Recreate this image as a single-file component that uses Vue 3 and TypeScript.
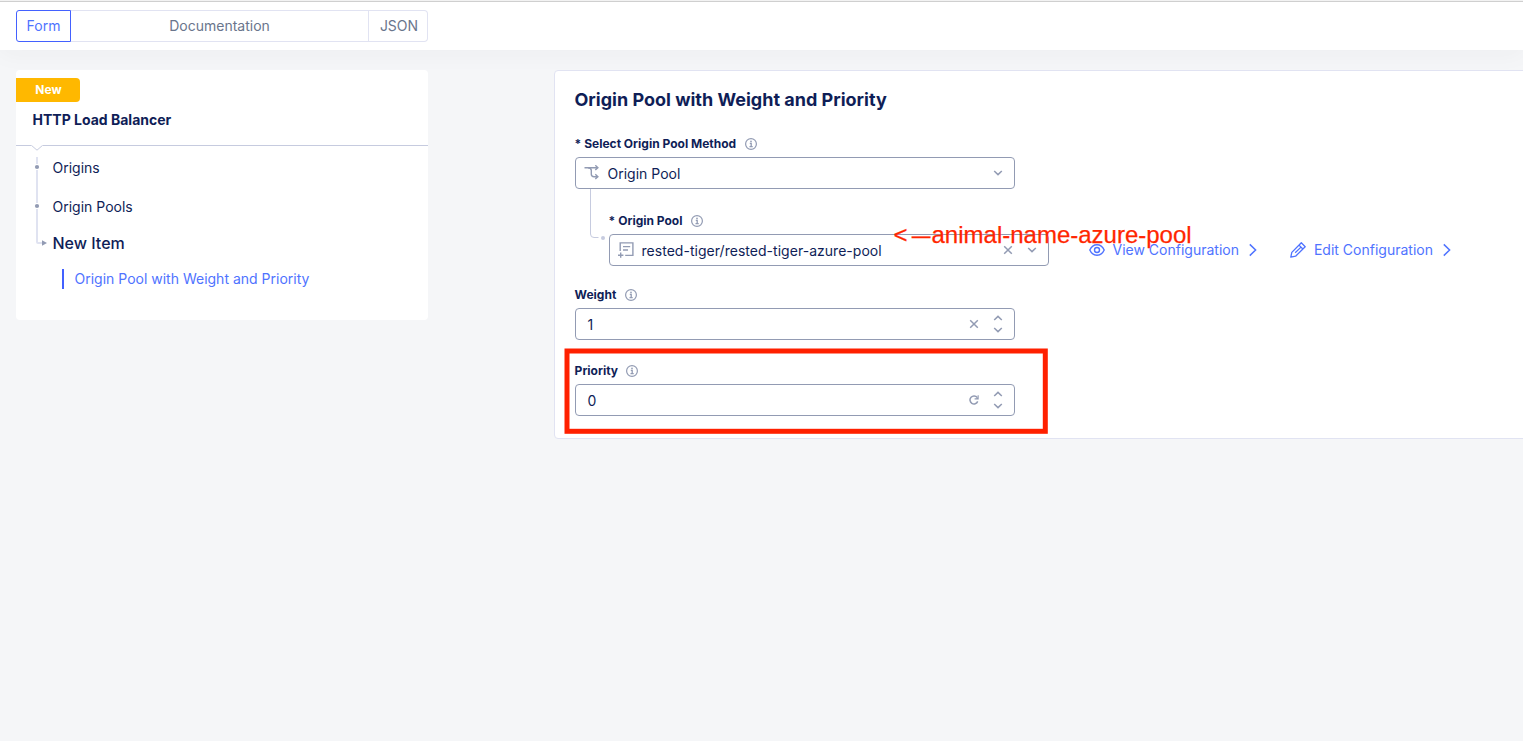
<script setup lang="ts">
interface Tab {
  id: string
  label: string
}
interface Crumb {
  id: string
  label: string
}

const tabs: Tab[] = [
  { id: 'form', label: 'Form' },
  { id: 'docs', label: 'Documentation' },
  { id: 'json', label: 'JSON' },
]
const activeTab = 'form'

const crumbs: Crumb[] = [
  { id: 'origins', label: 'Origins' },
  { id: 'pools', label: 'Origin Pools' },
]
</script>

<template>
  <div class="page">
    <svg class="defs" width="0" height="0">
      <symbol id="info" viewBox="0 0 12 12">
        <g fill="none" stroke="currentColor">
          <circle cx="6" cy="6" r="5.4" stroke-width="1.2" />
          <path d="M4.8 5.3H6.2V8.6M4.5 8.7H7.7" stroke-width="1.3" />
        </g>
        <circle cx="6" cy="3.4" r="0.85" fill="currentColor" />
      </symbol>
      <symbol id="down" viewBox="0 0 10 10">
        <path d="M1.2 3L5 6.6L8.8 3" fill="none" stroke="currentColor" stroke-width="1.5" />
      </symbol>
      <symbol id="up" viewBox="0 0 10 10">
        <path d="M1.2 7L5 3.4L8.8 7" fill="none" stroke="currentColor" stroke-width="1.5" />
      </symbol>
      <symbol id="clear" viewBox="0 0 10 10">
        <path d="M1.2 1.2L8.8 8.8M8.8 1.2L1.2 8.8" fill="none" stroke="currentColor" stroke-width="1.5" />
      </symbol>
      <symbol id="next" viewBox="0 0 10 14">
        <path d="M1.8 1.4L7.6 7L1.8 12.6" fill="none" stroke="currentColor" stroke-width="1.5" />
      </symbol>
    </svg>

    <header class="topbar">
      <nav class="tabs">
        <button
          v-for="tab in tabs"
          :key="tab.id"
          type="button"
          class="tab"
          :class="[tab.id, { active: tab.id === activeTab }]"
        >
          <span>{{ tab.label }}</span>
        </button>
      </nav>
    </header>

    <main class="content">
      <aside class="side">
        <div class="badge"><span>New</span></div>
        <h2 class="side-title">HTTP Load Balancer</h2>
        <div class="divider">
          <svg class="notch" width="12" height="8" viewBox="0 0 12 8">
            <path d="M0.5 0H11.5V1L6 5.6L0.5 1Z" fill="#fff" />
            <path d="M0.6 0.5L6 5.2L11.4 0.5" fill="none" stroke="#c6cbdf" />
          </svg>
        </div>
        <div class="tree">
          <svg class="rail" width="14" height="92" viewBox="0 0 14 92">
            <path d="M3 0V85Q3 86 4 86H8" fill="none" stroke="#e0e3f1" stroke-width="2" />
            <path d="M3 7V13M3 46V52" stroke="#fff" stroke-width="2" />
            <circle cx="3" cy="10" r="2.1" fill="#929bb3" />
            <circle cx="3" cy="49" r="2.1" fill="#929bb3" />
            <path d="M8 83.2L13 86L8 88.8Z" fill="#929bb3" />
          </svg>
          <ul class="crumbs">
            <li v-for="crumb in crumbs" :key="crumb.id" class="crumb">{{ crumb.label }}</li>
            <li class="crumb current">New Item</li>
            <li class="crumb section"><span>Origin Pool with Weight and Priority</span></li>
          </ul>
        </div>
      </aside>

      <section class="panel">
        <h1 class="panel-title">Origin Pool with Weight and Priority</h1>

        <div class="field">
          <div class="label">
            <span>* Select Origin Pool Method</span>
            <svg class="info"><use href="#info" /></svg>
          </div>
          <div class="control">
            <svg class="lead" width="16" height="16" viewBox="0 0 16 16">
              <g fill="none" stroke="currentColor" stroke-width="1.4">
                <path d="M0.5 2.7H14M11.3 0.3L13.9 2.7L11.3 5.1" />
                <path d="M4 2.7Q7.3 2.7 7.3 5.5V9.3Q7.3 11.7 10 11.7H14M11.3 9.3L13.9 11.7L11.3 14.1" />
              </g>
            </svg>
            <span class="value">Origin Pool</span>
            <svg class="mini"><use href="#down" /></svg>
          </div>
        </div>

        <div class="nested">
          <svg class="elbow" width="16" height="52" viewBox="0 0 16 52">
            <path d="M1.5 0V45Q1.5 48.5 5 48.5H9.5" fill="none" stroke="#c6cbdf" />
            <circle cx="14" cy="49" r="2" fill="#c6cbdf" />
          </svg>
          <div class="field">
            <div class="label">
              <span>* Origin Pool</span>
              <svg class="info"><use href="#info" /></svg>
            </div>
            <div class="control">
              <svg class="lead" width="16" height="16" viewBox="0 0 16 16">
                <g fill="none" stroke="currentColor" stroke-width="1.4">
                  <path d="M2.2 9V0.9H14.9V13.4H7.2M5 4.6H12.2M5 8H10" />
                  <path d="M2.7 10.5V15.8M0 13.2H5.4" />
                </g>
              </svg>
              <span class="value pool-value">rested-tiger/rested-tiger-azure-pool</span>
              <svg class="mini"><use href="#clear" /></svg>
              <svg class="mini"><use href="#down" /></svg>
            </div>
          </div>
          <div class="links">
            <a class="link">
              <svg width="16" height="16" viewBox="0 0 16 16">
                <g fill="none" stroke="currentColor" stroke-width="1.4">
                  <path d="M0.8 8C2.3 4.7 5 2.8 8 2.8S13.7 4.7 15.2 8C13.7 11.3 11 13.2 8 13.2S2.3 11.3 0.8 8Z" />
                  <circle cx="8" cy="8" r="2.5" />
                </g>
              </svg>
              <span>View Configuration</span>
              <svg class="next"><use href="#next" /></svg>
            </a>
            <a class="link edit">
              <svg width="16" height="16" viewBox="0 0 16 16">
                <g fill="none" stroke="currentColor" stroke-width="1.3" stroke-linejoin="round">
                  <path d="M0.8 15.2L1.8 10.4L11.3 0.8L15.2 4.7L5.6 14.2Z" />
                  <path d="M9 3.1L12.9 7M11 5.1L5.2 10.8" />
                </g>
              </svg>
              <span>Edit Configuration</span>
              <svg class="next"><use href="#next" /></svg>
            </a>
          </div>
        </div>

        <div class="field weight">
          <div class="label">
            <span>Weight</span>
            <svg class="info"><use href="#info" /></svg>
          </div>
          <div class="control numeric">
            <span class="value">1</span>
            <svg class="mini"><use href="#clear" /></svg>
            <span class="stepper">
              <svg class="mini"><use href="#up" /></svg>
              <svg class="mini"><use href="#down" /></svg>
            </span>
          </div>
        </div>

        <div class="field priority">
          <div class="label">
            <span>Priority</span>
            <svg class="info"><use href="#info" /></svg>
          </div>
          <div class="control numeric">
            <span class="value">0</span>
            <svg class="mini" viewBox="0 0 10 10">
              <path d="M8.2 2.5A4 4 0 1 0 8.7 6.4" fill="none" stroke="currentColor" stroke-width="1.5" />
              <path d="M9.7 0.3V4.5H5.6V3.3H7.4L8.6 2.2V0.3Z" fill="currentColor" />
            </svg>
            <span class="stepper">
              <svg class="mini"><use href="#up" /></svg>
              <svg class="mini"><use href="#down" /></svg>
            </span>
          </div>
        </div>
      </section>
    </main>

    <div class="callout"><span>&lt;</span><span class="dash">—</span><span>animal-name-azure-pool</span></div>
    <svg class="highlight" width="485" height="87" viewBox="0 0 485 87">
      <rect x="3" y="3" width="478.3" height="80.3" fill="none" stroke="#ff2000" stroke-width="5" />
    </svg>
  </div>
</template>

<style>
body {
  margin: 0;
  background: #f5f6f8;
}
</style>

<style scoped>
* {
  box-sizing: border-box;
}
.page {
  position: relative;
  height: 741px;
  overflow: hidden;
  background: #f5f6f8;
  color: #0f1e57;
  font-family: Inter, "Liberation Sans", sans-serif;
  font-size: 14px;
}
.defs {
  position: absolute;
}
svg {
  display: block;
  flex: none;
}
.topbar {
  height: 50px;
  padding: 9px 16px 0;
  border-top: 1px solid #f2f2f2;
  background: #fff;
  box-shadow: inset 0 1px 0 #cfcfcf, 0 4px 24px rgba(40, 45, 60, 0.04);
}
.tabs {
  display: flex;
  width: 412px;
  height: 32px;
}
.tab {
  padding: 0 0 1px;
  border: 1px solid #e1e3f2;
  border-left: 0;
  background: #fff;
  color: #6a758c;
  font: inherit;
}
.tab.form {
  width: 55px;
  border-left: 1px solid #e1e3f2;
  border-radius: 3px 0 0 3px;
}
.tab.docs {
  flex: 1;
}
.tab.json {
  width: 59px;
  padding-left: 2px;
  border-radius: 0 4px 4px 0;
}
.tab.active {
  border-color: #4361ff;
  color: #4f73ff;
}
.content {
  display: flex;
  align-items: flex-start;
  padding: 20px 0 0 16px;
}
.side {
  flex: none;
  width: 412px;
  height: 250px;
  padding-top: 8px;
  border-radius: 4px;
  background: #fff;
}
.badge {
  width: 64px;
  height: 24px;
  padding-left: 1px;
  border-radius: 0 4px 4px 0;
  background: #ffb800;
  color: #fff;
  font-size: 12px;
  font-weight: 700;
  line-height: 24px;
  text-align: center;
}
.side-title {
  margin: 8px 0 0 16.5px;
  font-size: 14px;
  font-weight: 700;
  line-height: 20px;
}
.divider {
  height: 1px;
  margin-top: 15px;
  background: #c6cbdf;
}
.notch {
  margin-left: 15px;
}
.tree {
  display: flex;
  padding-left: 18px;
  margin-top: 11px;
}
.crumbs {
  margin: 1px 0 0;
  padding: 0 0 0 4.5px;
  list-style: none;
}
.crumb {
  height: 39px;
  line-height: 20px;
}
.crumb.current {
  height: 33px;
  margin-top: -3px;
  font-size: 16px;
  font-weight: 500;
}
.crumb.section {
  height: 20px;
  margin: 3px 0 0 9.5px;
  padding-left: 10.5px;
  border-left: 2px solid #4361ff;
  color: #4f73ff;
}
.panel {
  flex: none;
  width: 980px;
  height: 369px;
  margin-left: 126px;
  padding: 16px 20px;
  border: 1px solid #e1e3f2;
  border-radius: 4px 0 0 4px;
  background: #fff;
}
.panel-title {
  margin: 0 0 24px -0.5px;
  padding-top: 1px;
  font-size: 18px;
  font-weight: 700;
  line-height: 24px;
}
.field {
  display: flex;
  flex-direction: column;
  gap: 5px;
  width: 440px;
}
.label {
  display: flex;
  align-items: center;
  gap: 8.4px;
  height: 16px;
  margin-left: -0.4px;
  font-size: 12px;
  font-weight: 700;
  line-height: 16px;
}
.info {
  width: 12px;
  height: 12px;
  color: #929bb3;
}
.control {
  display: flex;
  align-items: center;
  height: 32px;
  padding: 0 11.5px 0 8px;
  border: 1px solid #929bb3;
  border-radius: 4px;
  background: #fff;
}
.lead {
  margin-right: 7.5px;
  color: #929bb3;
}
.value {
  flex: 1;
  padding-top: 2px;
  line-height: 20px;
}
.pool-value {
  letter-spacing: 0.03px;
}
.mini {
  width: 10px;
  height: 10px;
  color: #929bb3;
}
.mini + .mini,
.mini + .stepper {
  margin-left: 14px;
}
.numeric {
  padding-left: 11.5px;
}
.stepper {
  display: flex;
  flex-direction: column;
  gap: 2px;
}
.stepper .mini {
  margin: 0;
}
.nested {
  display: flex;
  padding-left: 14px;
}
.nested .field {
  margin: 24px 0 0 4px;
}
.links {
  display: flex;
  align-items: center;
  height: 32px;
  margin: 45px 0 0 39.5px;
}
.link {
  display: flex;
  align-items: center;
  color: #4f73ff;
}
.link span {
  margin: 0 9.5px 0 8px;
  padding-bottom: 2px;
}
.link.edit {
  margin-left: 31.5px;
}
.next {
  width: 10px;
  height: 14px;
}
.weight {
  margin-top: 21px;
}
.priority {
  margin-top: 23px;
}
.callout {
  position: absolute;
  top: 220px;
  left: 893.5px;
  display: flex;
  color: #ff2600;
  font-family: "Liberation Sans", sans-serif;
  font-size: 24px;
  line-height: 30px;
  white-space: nowrap;
  -webkit-text-stroke: 0.25px #ff2600;
}
.dash {
  transform: translateX(1px) scaleX(0.78);
}
.highlight {
  position: absolute;
  top: 348px;
  left: 564px;
}
</style>
